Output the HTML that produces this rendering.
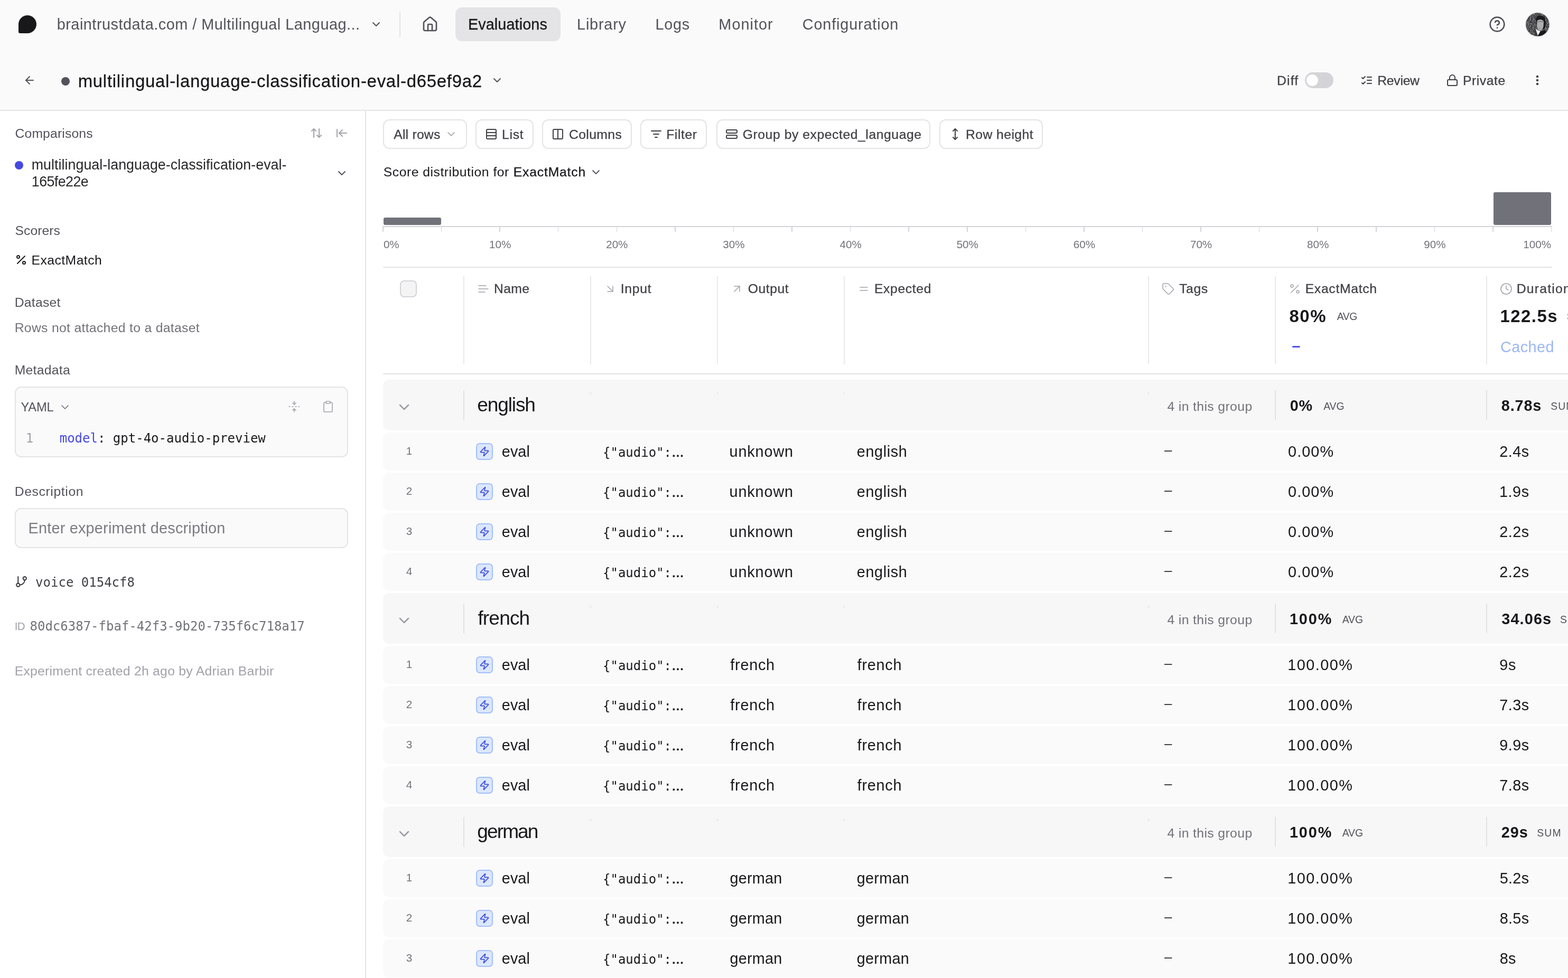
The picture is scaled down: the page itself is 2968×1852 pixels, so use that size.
<!DOCTYPE html>
<html lang="en"><head><meta charset="utf-8"><title>Braintrust - Experiment</title>
<style>
*{box-sizing:border-box;margin:0;padding:0}
html,body{width:2968px;height:1852px;overflow:hidden;background:#fff}
@media (max-width:1600px) and (min-resolution:1.5dppx){body{zoom:.5}}
body{position:relative;font-family:"Liberation Sans",sans-serif;color:#18181b}
.a{position:absolute}
.t{position:absolute;white-space:nowrap}
#tx{position:absolute;left:0;top:0;width:2968px;height:1852px;overflow:hidden;will-change:transform}
.m{font-family:"DejaVu Sans Mono","Liberation Mono",monospace}
.w5{-webkit-text-stroke:.3px currentColor}
.w6{font-weight:700}
svg{position:absolute;overflow:visible}
.btn{position:absolute;top:226px;height:56px;border:2px solid #e4e4e7;border-radius:12px;background:#fff}
.row{position:absolute;left:725px;width:2243px;height:72px;background:#fafafa;border-radius:12px 0 0 12px}
.grp{position:absolute;left:725px;width:2243px;height:96px;background:#f7f7f8;border-radius:12px 0 0 12px}
.ic{position:absolute;left:901px;width:32px;height:32px;border:2px solid #a3bffa;background:#dbe7fe;border-radius:7px}
</style></head><body>
<div class="a" style="left:0px;top:0px;width:2968px;height:208px;background:#fafafa"></div>
<div class="a" style="left:0px;top:208px;width:2968px;height:2px;background:#e4e4e7"></div>
<div class="a" style="left:35px;top:28.5px;width:34px;height:34px;background:#18181b;border-radius:17px 17px 17px 3px"></div>
<svg style="left:700px;top:34.25px;color:#52525b" width="24" height="24" viewBox="0 0 24 24" fill="none" stroke="currentColor" stroke-width="2" stroke-linecap="round" stroke-linejoin="round"><path d="m6 9 6 6 6-6"/></svg>
<div class="a" style="left:756px;top:22px;width:2px;height:48px;background:#e4e4e7"></div>
<svg style="left:797.8px;top:29.5px;color:#52525b" width="32" height="32" viewBox="0 0 24 24" fill="none" stroke="currentColor" stroke-width="2" stroke-linecap="round" stroke-linejoin="round"><path d="M15 21v-8a1 1 0 0 0-1-1h-4a1 1 0 0 0-1 1v8"/><path d="M3 10a2 2 0 0 1 .709-1.528l7-5.999a2 2 0 0 1 2.582 0l7 5.999A2 2 0 0 1 21 10v9a2 2 0 0 1-2 2H5a2 2 0 0 1-2-2z"/></svg>
<div class="a" style="left:862px;top:14px;width:199px;height:64px;background:#e4e4e7;border-radius:12px"></div>
<svg style="left:2818.1px;top:29.8px;color:#52525b" width="32" height="32" viewBox="0 0 24 24" fill="none" stroke="currentColor" stroke-width="2" stroke-linecap="round" stroke-linejoin="round"><circle cx="12" cy="12" r="10"/><path d="M9.09 9a3 3 0 0 1 5.83 1c0 2-3 3-3 3"/><path d="M12 17h.01"/></svg>
<svg style="left:2886.7px;top:22.6px" width="46.8" height="46.8" viewBox="0 0 46.8 46.8"><defs><clipPath id="av"><circle cx="23.4" cy="23.4" r="22.2"/></clipPath><filter id="nz" x="0" y="0" width="100%" height="100%"><feTurbulence type="fractalNoise" baseFrequency="0.55" numOctaves="2" seed="7"/><feColorMatrix type="matrix" values="0 0 0 0 0.55  0 0 0 0 0.55  0 0 0 0 0.56  2 2 2 0 -2.9"/></filter></defs><circle cx="23.4" cy="23.4" r="23.4" fill="#e4e4e7"/><g clip-path="url(#av)"><rect width="47" height="47" fill="#39393b"/><rect width="47" height="47" filter="url(#nz)"/><path d="M20 12c2-7 15-8 18 1l1 10-3 9-14-2z" fill="#1c1c1e"/><path d="M22.500 17c2-4 11-4 12.500 1l-.5 9c-1 5-4 8-6.500 8s-5.500-4-6-9z" fill="#aeaeb1"/><path d="M24 19c3-2 7-2 10 0" stroke="#6e6e72" stroke-width="1.200" fill="none"/><path d="M25 30c2 1.500 5 1.500 7 0" stroke="#8a8a8e" stroke-width="1" fill="none"/><path d="M18.500 31l3.500 3 4 12-9-2z" fill="#3c3c3f"/><path d="M19.500 31.500l4.500 13 5-8.500c-3-.5-6-2-9.500-4.500z" fill="#f4f4f4"/><path d="M24 44.500l5-8.500 9-2 3 8-8 5z" fill="#1a1a1c"/></g></svg>
<svg style="left:44px;top:140px;color:#52525b" width="24" height="24" viewBox="0 0 24 24" fill="none" stroke="currentColor" stroke-width="2" stroke-linecap="round" stroke-linejoin="round"><path d="m12 19-7-7 7-7"/><path d="M19 12H5"/></svg>
<div class="a" style="left:116px;top:145.8px;width:16px;height:16px;background:#52525b;border-radius:50%"></div>
<svg style="left:929px;top:140px;color:#52525b" width="24" height="24" viewBox="0 0 24 24" fill="none" stroke="currentColor" stroke-width="2" stroke-linecap="round" stroke-linejoin="round"><path d="m6 9 6 6 6-6"/></svg>
<div class="a" style="left:2470px;top:137px;width:54px;height:30px;background:#d4d4d8;border-radius:15px"></div>
<div class="a" style="left:2473.2px;top:141px;width:22px;height:22px;background:#fff;border-radius:50%"></div>
<svg style="left:2575px;top:140.2px;color:#3f3f46" width="24" height="24" viewBox="0 0 24 24" fill="none" stroke="currentColor" stroke-width="2" stroke-linecap="round" stroke-linejoin="round"><path d="m3 17 2 2 4-4"/><path d="m3 7 2 2 4-4"/><path d="M13 6h8"/><path d="M13 12h8"/><path d="M13 18h8"/></svg>
<svg style="left:2736.9px;top:139.8px;color:#3f3f46" width="24" height="24" viewBox="0 0 24 24" fill="none" stroke="currentColor" stroke-width="2" stroke-linecap="round" stroke-linejoin="round"><rect width="18" height="11" x="3" y="11" rx="2" ry="2"/><path d="M7 11V7a5 5 0 0 1 10 0v4"/></svg>
<svg style="left:2897.8px;top:140.2px;color:#3f3f46" width="24" height="24" viewBox="0 0 24 24" fill="none" stroke="currentColor" stroke-width="2.6" stroke-linecap="round" stroke-linejoin="round"><circle cx="12" cy="12" r="1"/><circle cx="12" cy="5" r="1"/><circle cx="12" cy="19" r="1"/></svg>
<div class="a" style="left:691px;top:210px;width:2px;height:1642px;background:#e4e4e7"></div>
<svg style="left:587px;top:240.1px;color:#a1a1aa" width="24" height="24" viewBox="0 0 24 24" fill="none" stroke="currentColor" stroke-width="2" stroke-linecap="round" stroke-linejoin="round"><path d="m21 16-4 4-4-4"/><path d="M17 20V4"/><path d="m3 8 4-4 4 4"/><path d="M7 4v16"/></svg>
<svg style="left:635px;top:240.1px;color:#a1a1aa" width="24" height="24" viewBox="0 0 24 24" fill="none" stroke="currentColor" stroke-width="2" stroke-linecap="round" stroke-linejoin="round"><path d="M3 19V5"/><path d="m13 6-6 6 6 6"/><path d="M7 12h14"/></svg>
<div class="a" style="left:28px;top:305px;width:16px;height:16px;background:#4649e0;border-radius:50%"></div>
<svg style="left:635px;top:316px;color:#52525b" width="24" height="24" viewBox="0 0 24 24" fill="none" stroke="currentColor" stroke-width="2" stroke-linecap="round" stroke-linejoin="round"><path d="m6 9 6 6 6-6"/></svg>
<svg style="left:28px;top:480px;color:#18181b" width="24" height="24" viewBox="0 0 24 24" fill="none" stroke="currentColor" stroke-width="2" stroke-linecap="round" stroke-linejoin="round"><line x1="19" x2="5" y1="5" y2="19"/><circle cx="6.5" cy="6.5" r="2.5"/><circle cx="17.5" cy="17.5" r="2.5"/></svg>
<div class="a" style="left:28px;top:732px;width:631px;height:133.5px;border:2px solid #e4e4e7;border-radius:12px;background:#fafafa"></div>
<svg style="left:111px;top:758.5px;color:#71717a" width="24" height="24" viewBox="0 0 24 24" fill="none" stroke="currentColor" stroke-width="1.6" stroke-linecap="round" stroke-linejoin="round"><path d="m6 9 6 6 6-6"/></svg>
<svg style="left:544.6px;top:757.75px;color:#a1a1aa" width="24" height="24" viewBox="0 0 24 24" fill="none" stroke="currentColor" stroke-width="1.6" stroke-linecap="round" stroke-linejoin="round"><path d="M12 22v-6"/><path d="M12 8V2"/><path d="M4 12H2"/><path d="M10 12H8"/><path d="M16 12h-2"/><path d="M22 12h-2"/><path d="m15 19-3-3-3 3"/><path d="m15 5-3 3-3-3"/></svg>
<svg style="left:609.4px;top:758px;color:#a1a1aa" width="24" height="24" viewBox="0 0 24 24" fill="none" stroke="currentColor" stroke-width="1.6" stroke-linecap="round" stroke-linejoin="round"><rect width="8" height="4" x="8" y="2" rx="1" ry="1"/><path d="M16 4h2a2 2 0 0 1 2 2v14a2 2 0 0 1-2 2H6a2 2 0 0 1-2-2V6a2 2 0 0 1 2-2h2"/></svg>
<div class="a" style="left:28px;top:962px;width:631px;height:76px;border:2px solid #e4e4e7;border-radius:12px;background:#fafafa"></div>
<svg style="left:27.5px;top:1089.4px;color:#3f3f46" width="25" height="25" viewBox="0 0 24 24" fill="none" stroke="currentColor" stroke-width="2" stroke-linecap="round" stroke-linejoin="round"><line x1="6" x2="6" y1="3" y2="15"/><circle cx="18" cy="6" r="3"/><circle cx="6" cy="18" r="3"/><path d="M18 9a9 9 0 0 1-9 9"/></svg>
<div class="btn" style="left:725px;width:158.75px"></div>
<svg style="left:842px;top:242px;color:#a1a1aa" width="24" height="24" viewBox="0 0 24 24" fill="none" stroke="currentColor" stroke-width="1.7" stroke-linecap="round" stroke-linejoin="round"><path d="m6 9 6 6 6-6"/></svg>
<div class="btn" style="left:900px;width:109.5px"></div>
<svg style="left:918px;top:242px;color:#3f3f46" width="24" height="24" viewBox="0 0 24 24" fill="none" stroke="currentColor" stroke-width="2" stroke-linecap="round" stroke-linejoin="round"><rect width="18" height="18" x="3" y="3" rx="2"/><path d="M21 9H3"/><path d="M21 15H3"/></svg>
<div class="btn" style="left:1026.25px;width:169.25px"></div>
<svg style="left:1043.75px;top:242px;color:#3f3f46" width="24" height="24" viewBox="0 0 24 24" fill="none" stroke="currentColor" stroke-width="2" stroke-linecap="round" stroke-linejoin="round"><rect width="18" height="18" x="3" y="3" rx="2"/><path d="M12 3v18"/></svg>
<div class="btn" style="left:1212px;width:126.25px"></div>
<svg style="left:1229.5px;top:242px;color:#3f3f46" width="24" height="24" viewBox="0 0 24 24" fill="none" stroke="currentColor" stroke-width="2" stroke-linecap="round" stroke-linejoin="round"><path d="M3 6h18"/><path d="M7 12h10"/><path d="M10 18h4"/></svg>
<div class="btn" style="left:1355.5px;width:405.75px"></div>
<svg style="left:1372.75px;top:242.4px;color:#3f3f46" width="24" height="24" viewBox="0 0 24 24" fill="none" stroke="currentColor" stroke-width="2" stroke-linecap="round" stroke-linejoin="round"><rect width="20" height="6" x="2" y="4" rx="2"/><rect width="20" height="6" x="2" y="14" rx="2"/></svg>
<div class="btn" style="left:1778px;width:196px"></div>
<svg style="left:1796px;top:242.4px;color:#3f3f46" width="24" height="24" viewBox="0 0 24 24" fill="none" stroke="currentColor" stroke-width="2" stroke-linecap="round" stroke-linejoin="round"><path d="M12 2v20"/><path d="m8 18 4 4 4-4"/><path d="m8 6 4-4 4 4"/></svg>
<svg style="left:1116px;top:313.5px;color:#52525b" width="24" height="24" viewBox="0 0 24 24" fill="none" stroke="currentColor" stroke-width="1.8" stroke-linecap="round" stroke-linejoin="round"><path d="m6 9 6 6 6-6"/></svg>
<div class="a" style="left:726px;top:412px;width:109px;height:14px;background:#71717a;border-radius:3px"></div>
<div class="a" style="left:2827px;top:364px;width:109px;height:62px;background:#71717a;border-radius:3px"></div>
<div class="a" style="left:724.25px;top:428px;width:2213.25px;height:2px;background:#d4d4d8"></div>
<div class="a" style="left:724.25px;top:429px;width:1.5px;height:10px;background:#d4d4d8"></div>
<div class="a" style="left:834.83px;top:429px;width:1.5px;height:10px;background:#d4d4d8"></div>
<div class="a" style="left:945.4px;top:429px;width:1.5px;height:10px;background:#d4d4d8"></div>
<div class="a" style="left:1055.97px;top:429px;width:1.5px;height:10px;background:#d4d4d8"></div>
<div class="a" style="left:1166.55px;top:429px;width:1.5px;height:10px;background:#d4d4d8"></div>
<div class="a" style="left:1277.12px;top:429px;width:1.5px;height:10px;background:#d4d4d8"></div>
<div class="a" style="left:1387.7px;top:429px;width:1.5px;height:10px;background:#d4d4d8"></div>
<div class="a" style="left:1498.28px;top:429px;width:1.5px;height:10px;background:#d4d4d8"></div>
<div class="a" style="left:1608.85px;top:429px;width:1.5px;height:10px;background:#d4d4d8"></div>
<div class="a" style="left:1719.43px;top:429px;width:1.5px;height:10px;background:#d4d4d8"></div>
<div class="a" style="left:1830px;top:429px;width:1.5px;height:10px;background:#d4d4d8"></div>
<div class="a" style="left:1940.58px;top:429px;width:1.5px;height:10px;background:#d4d4d8"></div>
<div class="a" style="left:2051.15px;top:429px;width:1.5px;height:10px;background:#d4d4d8"></div>
<div class="a" style="left:2161.73px;top:429px;width:1.5px;height:10px;background:#d4d4d8"></div>
<div class="a" style="left:2272.3px;top:429px;width:1.5px;height:10px;background:#d4d4d8"></div>
<div class="a" style="left:2382.88px;top:429px;width:1.5px;height:10px;background:#d4d4d8"></div>
<div class="a" style="left:2493.45px;top:429px;width:1.5px;height:10px;background:#d4d4d8"></div>
<div class="a" style="left:2604.03px;top:429px;width:1.5px;height:10px;background:#d4d4d8"></div>
<div class="a" style="left:2714.6px;top:429px;width:1.5px;height:10px;background:#d4d4d8"></div>
<div class="a" style="left:2825.18px;top:429px;width:1.5px;height:10px;background:#d4d4d8"></div>
<div class="a" style="left:2935.75px;top:429px;width:1.5px;height:10px;background:#d4d4d8"></div>
<div class="a" style="left:725px;top:505px;width:2212.5px;height:2px;background:#e4e4e7"></div>
<div class="a" style="left:725px;top:707px;width:2243px;height:2px;background:#e4e4e7"></div>
<div class="a" style="left:877px;top:523px;width:2px;height:167px;background:#e9e9ec"></div>
<div class="a" style="left:1117px;top:523px;width:2px;height:167px;background:#e9e9ec"></div>
<div class="a" style="left:1357px;top:523px;width:2px;height:167px;background:#e9e9ec"></div>
<div class="a" style="left:1597px;top:523px;width:2px;height:167px;background:#e9e9ec"></div>
<div class="a" style="left:2173px;top:523px;width:2px;height:167px;background:#e9e9ec"></div>
<div class="a" style="left:2413px;top:523px;width:2px;height:167px;background:#e9e9ec"></div>
<div class="a" style="left:2813px;top:523px;width:2px;height:167px;background:#e9e9ec"></div>
<div class="a" style="left:757px;top:530.75px;width:32px;height:32px;border:2px solid #d4d4d8;border-radius:8px;background:#f4f4f5"></div>
<svg style="left:902.75px;top:534.9px;color:#a1a1aa" width="24" height="24" viewBox="0 0 24 24" fill="none" stroke="currentColor" stroke-width="1.5" stroke-linecap="round" stroke-linejoin="round"><path d="M17 6H3"/><path d="M21 12H3"/><path d="M15 18H3"/></svg>
<svg style="left:1143px;top:535px;color:#a1a1aa" width="24" height="24" viewBox="0 0 24 24" fill="none" stroke="currentColor" stroke-width="1.5" stroke-linecap="round" stroke-linejoin="round"><path d="m7 7 10 10"/><path d="M17 7v10H7"/></svg>
<svg style="left:1383px;top:534.5px;color:#a1a1aa" width="24" height="24" viewBox="0 0 24 24" fill="none" stroke="currentColor" stroke-width="1.5" stroke-linecap="round" stroke-linejoin="round"><path d="M7 7h10v10"/><path d="M7 17 17 7"/></svg>
<svg style="left:1622.75px;top:534.6px;color:#a1a1aa" width="24" height="24" viewBox="0 0 24 24" fill="none" stroke="currentColor" stroke-width="1.5" stroke-linecap="round" stroke-linejoin="round"><line x1="5" x2="19" y1="9" y2="9"/><line x1="5" x2="19" y1="15" y2="15"/></svg>
<svg style="left:2199px;top:534.5px;color:#a1a1aa" width="24" height="24" viewBox="0 0 24 24" fill="none" stroke="currentColor" stroke-width="1.5" stroke-linecap="round" stroke-linejoin="round"><path d="M12.586 2.586A2 2 0 0 0 11.172 2H4a2 2 0 0 0-2 2v7.172a2 2 0 0 0 .586 1.414l8.704 8.704a2.426 2.426 0 0 0 3.42 0l6.58-6.58a2.426 2.426 0 0 0 0-3.42z"/><circle cx="7.5" cy="7.5" r=".5" fill="currentColor"/></svg>
<svg style="left:2439.2px;top:535px;color:#a1a1aa" width="24" height="24" viewBox="0 0 24 24" fill="none" stroke="currentColor" stroke-width="1.5" stroke-linecap="round" stroke-linejoin="round"><line x1="19" x2="5" y1="5" y2="19"/><circle cx="6.5" cy="6.5" r="2.5"/><circle cx="17.5" cy="17.5" r="2.5"/></svg>
<svg style="left:2838.75px;top:534.6px;color:#a1a1aa" width="24" height="24" viewBox="0 0 24 24" fill="none" stroke="currentColor" stroke-width="1.6" stroke-linecap="round" stroke-linejoin="round"><circle cx="12" cy="12" r="10"/><polyline points="12 6 12 12 16 14"/></svg>
<div class="grp" style="top:719px"></div>
<svg style="left:749px;top:755px;color:#9b9ba3" width="32" height="32" viewBox="0 0 24 24" fill="none" stroke="currentColor" stroke-width="1.9" stroke-linecap="round" stroke-linejoin="round"><path d="m6 9 6 6 6-6"/></svg>
<div class="a" style="left:877px;top:739px;width:2px;height:57px;background:#e2e2e5"></div>
<div class="a" style="left:1117px;top:743px;width:2px;height:4px;background:#e6e6e9"></div>
<div class="a" style="left:1357px;top:743px;width:2px;height:4px;background:#e6e6e9"></div>
<div class="a" style="left:1597px;top:743px;width:2px;height:4px;background:#e6e6e9"></div>
<div class="a" style="left:2173px;top:743px;width:2px;height:4px;background:#e6e6e9"></div>
<div class="a" style="left:2413px;top:739px;width:2px;height:56px;background:#e2e2e5"></div>
<div class="a" style="left:2813px;top:739px;width:2px;height:56px;background:#e2e2e5"></div>
<div class="row" style="top:819px"></div>
<div class="ic" style="top:839px"></div>
<svg style="left:907px;top:845px;color:#3f4ddb" width="20" height="20" viewBox="0 0 24 24" fill="none" stroke="currentColor" stroke-width="2" stroke-linecap="round" stroke-linejoin="round"><path d="M4 14a1 1 0 0 1-.78-1.63l9.9-10.2a.5.5 0 0 1 .86.46l-1.92 6.02A1 1 0 0 0 13 10h7a1 1 0 0 1 .78 1.63l-9.9 10.2a.5.5 0 0 1-.86-.46l1.92-6.02A1 1 0 0 0 11 14z"/></svg>
<div class="row" style="top:895px"></div>
<div class="ic" style="top:915px"></div>
<svg style="left:907px;top:921px;color:#3f4ddb" width="20" height="20" viewBox="0 0 24 24" fill="none" stroke="currentColor" stroke-width="2" stroke-linecap="round" stroke-linejoin="round"><path d="M4 14a1 1 0 0 1-.78-1.63l9.9-10.2a.5.5 0 0 1 .86.46l-1.92 6.02A1 1 0 0 0 13 10h7a1 1 0 0 1 .78 1.63l-9.9 10.2a.5.5 0 0 1-.86-.46l1.92-6.02A1 1 0 0 0 11 14z"/></svg>
<div class="row" style="top:971px"></div>
<div class="ic" style="top:991px"></div>
<svg style="left:907px;top:997px;color:#3f4ddb" width="20" height="20" viewBox="0 0 24 24" fill="none" stroke="currentColor" stroke-width="2" stroke-linecap="round" stroke-linejoin="round"><path d="M4 14a1 1 0 0 1-.78-1.63l9.9-10.2a.5.5 0 0 1 .86.46l-1.92 6.02A1 1 0 0 0 13 10h7a1 1 0 0 1 .78 1.63l-9.9 10.2a.5.5 0 0 1-.86-.46l1.92-6.02A1 1 0 0 0 11 14z"/></svg>
<div class="row" style="top:1047px"></div>
<div class="ic" style="top:1067px"></div>
<svg style="left:907px;top:1073px;color:#3f4ddb" width="20" height="20" viewBox="0 0 24 24" fill="none" stroke="currentColor" stroke-width="2" stroke-linecap="round" stroke-linejoin="round"><path d="M4 14a1 1 0 0 1-.78-1.63l9.9-10.2a.5.5 0 0 1 .86.46l-1.92 6.02A1 1 0 0 0 13 10h7a1 1 0 0 1 .78 1.63l-9.9 10.2a.5.5 0 0 1-.86-.46l1.92-6.02A1 1 0 0 0 11 14z"/></svg>
<div class="grp" style="top:1123px"></div>
<svg style="left:749px;top:1159px;color:#9b9ba3" width="32" height="32" viewBox="0 0 24 24" fill="none" stroke="currentColor" stroke-width="1.9" stroke-linecap="round" stroke-linejoin="round"><path d="m6 9 6 6 6-6"/></svg>
<div class="a" style="left:877px;top:1143px;width:2px;height:57px;background:#e2e2e5"></div>
<div class="a" style="left:1117px;top:1147px;width:2px;height:4px;background:#e6e6e9"></div>
<div class="a" style="left:1357px;top:1147px;width:2px;height:4px;background:#e6e6e9"></div>
<div class="a" style="left:1597px;top:1147px;width:2px;height:4px;background:#e6e6e9"></div>
<div class="a" style="left:2173px;top:1147px;width:2px;height:4px;background:#e6e6e9"></div>
<div class="a" style="left:2413px;top:1143px;width:2px;height:56px;background:#e2e2e5"></div>
<div class="a" style="left:2813px;top:1143px;width:2px;height:56px;background:#e2e2e5"></div>
<div class="row" style="top:1223px"></div>
<div class="ic" style="top:1243px"></div>
<svg style="left:907px;top:1249px;color:#3f4ddb" width="20" height="20" viewBox="0 0 24 24" fill="none" stroke="currentColor" stroke-width="2" stroke-linecap="round" stroke-linejoin="round"><path d="M4 14a1 1 0 0 1-.78-1.63l9.9-10.2a.5.5 0 0 1 .86.46l-1.92 6.02A1 1 0 0 0 13 10h7a1 1 0 0 1 .78 1.63l-9.9 10.2a.5.5 0 0 1-.86-.46l1.92-6.02A1 1 0 0 0 11 14z"/></svg>
<div class="row" style="top:1299px"></div>
<div class="ic" style="top:1319px"></div>
<svg style="left:907px;top:1325px;color:#3f4ddb" width="20" height="20" viewBox="0 0 24 24" fill="none" stroke="currentColor" stroke-width="2" stroke-linecap="round" stroke-linejoin="round"><path d="M4 14a1 1 0 0 1-.78-1.63l9.9-10.2a.5.5 0 0 1 .86.46l-1.92 6.02A1 1 0 0 0 13 10h7a1 1 0 0 1 .78 1.63l-9.9 10.2a.5.5 0 0 1-.86-.46l1.92-6.02A1 1 0 0 0 11 14z"/></svg>
<div class="row" style="top:1375px"></div>
<div class="ic" style="top:1395px"></div>
<svg style="left:907px;top:1401px;color:#3f4ddb" width="20" height="20" viewBox="0 0 24 24" fill="none" stroke="currentColor" stroke-width="2" stroke-linecap="round" stroke-linejoin="round"><path d="M4 14a1 1 0 0 1-.78-1.63l9.9-10.2a.5.5 0 0 1 .86.46l-1.92 6.02A1 1 0 0 0 13 10h7a1 1 0 0 1 .78 1.63l-9.9 10.2a.5.5 0 0 1-.86-.46l1.92-6.02A1 1 0 0 0 11 14z"/></svg>
<div class="row" style="top:1451px"></div>
<div class="ic" style="top:1471px"></div>
<svg style="left:907px;top:1477px;color:#3f4ddb" width="20" height="20" viewBox="0 0 24 24" fill="none" stroke="currentColor" stroke-width="2" stroke-linecap="round" stroke-linejoin="round"><path d="M4 14a1 1 0 0 1-.78-1.63l9.9-10.2a.5.5 0 0 1 .86.46l-1.92 6.02A1 1 0 0 0 13 10h7a1 1 0 0 1 .78 1.63l-9.9 10.2a.5.5 0 0 1-.86-.46l1.92-6.02A1 1 0 0 0 11 14z"/></svg>
<div class="grp" style="top:1527px"></div>
<svg style="left:749px;top:1563px;color:#9b9ba3" width="32" height="32" viewBox="0 0 24 24" fill="none" stroke="currentColor" stroke-width="1.9" stroke-linecap="round" stroke-linejoin="round"><path d="m6 9 6 6 6-6"/></svg>
<div class="a" style="left:877px;top:1547px;width:2px;height:57px;background:#e2e2e5"></div>
<div class="a" style="left:1117px;top:1551px;width:2px;height:4px;background:#e6e6e9"></div>
<div class="a" style="left:1357px;top:1551px;width:2px;height:4px;background:#e6e6e9"></div>
<div class="a" style="left:1597px;top:1551px;width:2px;height:4px;background:#e6e6e9"></div>
<div class="a" style="left:2173px;top:1551px;width:2px;height:4px;background:#e6e6e9"></div>
<div class="a" style="left:2413px;top:1547px;width:2px;height:56px;background:#e2e2e5"></div>
<div class="a" style="left:2813px;top:1547px;width:2px;height:56px;background:#e2e2e5"></div>
<div class="row" style="top:1627px"></div>
<div class="ic" style="top:1647px"></div>
<svg style="left:907px;top:1653px;color:#3f4ddb" width="20" height="20" viewBox="0 0 24 24" fill="none" stroke="currentColor" stroke-width="2" stroke-linecap="round" stroke-linejoin="round"><path d="M4 14a1 1 0 0 1-.78-1.63l9.9-10.2a.5.5 0 0 1 .86.46l-1.92 6.02A1 1 0 0 0 13 10h7a1 1 0 0 1 .78 1.63l-9.9 10.2a.5.5 0 0 1-.86-.46l1.92-6.02A1 1 0 0 0 11 14z"/></svg>
<div class="row" style="top:1703px"></div>
<div class="ic" style="top:1723px"></div>
<svg style="left:907px;top:1729px;color:#3f4ddb" width="20" height="20" viewBox="0 0 24 24" fill="none" stroke="currentColor" stroke-width="2" stroke-linecap="round" stroke-linejoin="round"><path d="M4 14a1 1 0 0 1-.78-1.63l9.9-10.2a.5.5 0 0 1 .86.46l-1.92 6.02A1 1 0 0 0 13 10h7a1 1 0 0 1 .78 1.63l-9.9 10.2a.5.5 0 0 1-.86-.46l1.92-6.02A1 1 0 0 0 11 14z"/></svg>
<div class="row" style="top:1779px"></div>
<div class="ic" style="top:1799px"></div>
<svg style="left:907px;top:1805px;color:#3f4ddb" width="20" height="20" viewBox="0 0 24 24" fill="none" stroke="currentColor" stroke-width="2" stroke-linecap="round" stroke-linejoin="round"><path d="M4 14a1 1 0 0 1-.78-1.63l9.9-10.2a.5.5 0 0 1 .86.46l-1.92 6.02A1 1 0 0 0 13 10h7a1 1 0 0 1 .78 1.63l-9.9 10.2a.5.5 0 0 1-.86-.46l1.92-6.02A1 1 0 0 0 11 14z"/></svg>
<div id="tx">
<div class="t" id="bc" style="top:27.60px;font-size:28.84px;line-height:37px;color:#52525b;left:107.70px;letter-spacing:0.515px;">braintrustdata.com / Multilingual Languag...</div>
<div class="t w5" id="n1" style="top:27.60px;font-size:28.84px;line-height:37px;color:#18181b;left:885.95px;letter-spacing:0.085px;">Evaluations</div>
<div class="t" id="n2" style="top:27.60px;font-size:28.84px;line-height:37px;color:#52525b;left:1092.05px;letter-spacing:0.800px;">Library</div>
<div class="t" id="n3" style="top:27.60px;font-size:28.84px;line-height:37px;color:#52525b;left:1240.45px;letter-spacing:0.772px;">Logs</div>
<div class="t" id="n4" style="top:27.60px;font-size:28.84px;line-height:37px;color:#52525b;left:1360.35px;letter-spacing:1.021px;">Monitor</div>
<div class="t" id="n5" style="top:27.60px;font-size:28.84px;line-height:37px;color:#52525b;left:1518.85px;letter-spacing:0.835px;">Configuration</div>
<div class="t w5" id="title" style="top:131.60px;font-size:32.96px;line-height:43px;color:#18181b;left:147.64px;letter-spacing:0.724px;">multilingual-language-classification-eval-d65ef9a2</div>
<div class="t w5" id="diff" style="top:136.60px;font-size:24.72px;line-height:32px;color:#3f3f46;left:2417.00px;letter-spacing:1.145px;">Diff</div>
<div class="t w5" id="review" style="top:136.60px;font-size:24.72px;line-height:32px;color:#3f3f46;left:2607.30px;letter-spacing:-0.279px;">Review</div>
<div class="t w5" id="private" style="top:136.60px;font-size:24.72px;line-height:32px;color:#3f3f46;left:2769.10px;letter-spacing:0.519px;">Private</div>
<div class="t" id="s_comp" style="top:236.55px;font-size:24.72px;line-height:32px;color:#52525b;left:28.50px;letter-spacing:0.144px;">Comparisons</div>
<div class="t" id="s_c1" style="top:295.05px;font-size:26.78px;line-height:35px;color:#27272a;left:59.78px;letter-spacing:0.052px;">multilingual-language-classification-eval-</div>
<div class="t" id="s_c2" style="top:326.80px;font-size:26.78px;line-height:35px;color:#27272a;left:59.78px;letter-spacing:-0.526px;">165fe22e</div>
<div class="t" id="s_sc" style="top:420.80px;font-size:24.72px;line-height:32px;color:#52525b;left:28.60px;letter-spacing:0.008px;">Scorers</div>
<div class="t" id="s_em" style="top:476.55px;font-size:24.72px;line-height:32px;color:#18181b;left:59.45px;letter-spacing:0.463px;">ExactMatch</div>
<div class="t" id="s_ds" style="top:556.55px;font-size:24.72px;line-height:32px;color:#52525b;left:27.70px;letter-spacing:0.247px;">Dataset</div>
<div class="t" id="s_rows" style="top:604.55px;font-size:24.72px;line-height:32px;color:#71717a;left:27.70px;letter-spacing:0.315px;">Rows not attached to a dataset</div>
<div class="t" id="s_md" style="top:684.55px;font-size:24.72px;line-height:32px;color:#52525b;left:27.70px;letter-spacing:0.269px;">Metadata</div>
<div class="t" id="s_yaml" style="top:755.55px;font-size:23.69px;line-height:31px;color:#52525b;left:39.45px;letter-spacing:-0.159px;">YAML</div>
<div class="t m" id="s_ln" style="top:815.10px;font-size:24px;line-height:31px;color:#a1a1aa;left:48.70px;">1</div>
<div class="t m" id="s_code" style="top:815.10px;font-size:24px;line-height:31px;color:#18181b;left:112.70px;"><span style="color:#4649e0">model</span>: gpt-4o-audio-preview</div>
<div class="t" id="s_desc" style="top:914.55px;font-size:24.72px;line-height:32px;color:#52525b;left:27.70px;letter-spacing:0.616px;">Description</div>
<div class="t" id="s_ph" style="top:981.80px;font-size:28.84px;line-height:37px;color:#7b7b84;left:53.45px;letter-spacing:0.223px;">Enter experiment description</div>
<div class="t m" id="s_voice" style="top:1087.50px;font-size:24px;line-height:31px;color:#3f3f46;left:67.10px;">voice 0154cf8</div>
<div class="t" id="s_id" style="top:1171.80px;font-size:20.6px;line-height:27px;color:#a1a1aa;left:27.80px;letter-spacing:-0.723px;">ID</div>
<div class="t m" id="s_uuid" style="top:1171.25px;font-size:24px;line-height:31px;color:#71717a;left:56.50px;">80dc6387-fbaf-42f3-9b20-735f6c718a17</div>
<div class="t" id="s_exp" style="top:1255.00px;font-size:24.72px;line-height:32px;color:#a1a1aa;left:27.70px;letter-spacing:0.266px;">Experiment created 2h ago by Adrian Barbir</div>
<div class="t w5" id="b1" style="top:238.80px;font-size:24.72px;line-height:32px;color:#3f3f46;left:745.20px;letter-spacing:0.226px;">All rows</div>
<div class="t w5" id="b2" style="top:238.80px;font-size:24.72px;line-height:32px;color:#3f3f46;left:949.95px;letter-spacing:0.734px;">List</div>
<div class="t w5" id="b3" style="top:238.80px;font-size:24.72px;line-height:32px;color:#3f3f46;left:1077.00px;letter-spacing:0.379px;">Columns</div>
<div class="t w5" id="b4" style="top:238.80px;font-size:24.72px;line-height:32px;color:#3f3f46;left:1261.20px;letter-spacing:0.580px;">Filter</div>
<div class="t w5" id="b5" style="top:238.80px;font-size:24.72px;line-height:32px;color:#3f3f46;left:1405.75px;letter-spacing:0.556px;">Group by expected_language</div>
<div class="t w5" id="b6" style="top:238.80px;font-size:24.72px;line-height:32px;color:#3f3f46;left:1827.95px;letter-spacing:0.445px;">Row height</div>
<div class="t" id="sd" style="top:309.55px;font-size:24.72px;line-height:32px;color:#18181b;left:725.85px;letter-spacing:0.511px;">Score distribution for</div>
<div class="t w5" id="sd2" style="top:309.55px;font-size:24.72px;line-height:32px;color:#18181b;left:971.70px;letter-spacing:0.824px;">ExactMatch</div>
<div class="t" id="ax0" style="top:448.80px;font-size:20.6px;line-height:27px;color:#71717a;left:725.90px;">0%</div>
<div class="t" id="ax1" style="top:448.80px;font-size:20.6px;line-height:27px;color:#71717a;left:846.65px;width:200px;text-align:center;">10%</div>
<div class="t" id="ax2" style="top:448.80px;font-size:20.6px;line-height:27px;color:#71717a;left:1067.8px;width:200px;text-align:center;">20%</div>
<div class="t" id="ax3" style="top:448.80px;font-size:20.6px;line-height:27px;color:#71717a;left:1288.95px;width:200px;text-align:center;">30%</div>
<div class="t" id="ax4" style="top:448.80px;font-size:20.6px;line-height:27px;color:#71717a;left:1510.1px;width:200px;text-align:center;">40%</div>
<div class="t" id="ax5" style="top:448.80px;font-size:20.6px;line-height:27px;color:#71717a;left:1731.25px;width:200px;text-align:center;">50%</div>
<div class="t" id="ax6" style="top:448.80px;font-size:20.6px;line-height:27px;color:#71717a;left:1952.4px;width:200px;text-align:center;">60%</div>
<div class="t" id="ax7" style="top:448.80px;font-size:20.6px;line-height:27px;color:#71717a;left:2173.55px;width:200px;text-align:center;">70%</div>
<div class="t" id="ax8" style="top:448.80px;font-size:20.6px;line-height:27px;color:#71717a;left:2394.7px;width:200px;text-align:center;">80%</div>
<div class="t" id="ax9" style="top:448.80px;font-size:20.6px;line-height:27px;color:#71717a;left:2615.85px;width:200px;text-align:center;">90%</div>
<div class="t" id="ax10" style="top:448.80px;font-size:20.6px;line-height:27px;color:#71717a;right:32px;">100%</div>
<div class="t w5" id="h1" style="top:530.55px;font-size:24.72px;line-height:32px;color:#3f3f46;left:934.95px;letter-spacing:0.370px;">Name</div>
<div class="t w5" id="h2" style="top:530.55px;font-size:24.72px;line-height:32px;color:#3f3f46;left:1174.75px;letter-spacing:0.723px;">Input</div>
<div class="t w5" id="h3" style="top:530.55px;font-size:24.72px;line-height:32px;color:#3f3f46;left:1415.85px;letter-spacing:0.513px;">Output</div>
<div class="t w5" id="h4" style="top:530.55px;font-size:24.72px;line-height:32px;color:#3f3f46;left:1654.95px;letter-spacing:0.641px;">Expected</div>
<div class="t w5" id="h5" style="top:530.55px;font-size:24.72px;line-height:32px;color:#3f3f46;left:2232.20px;letter-spacing:0.549px;">Tags</div>
<div class="t w5" id="h6" style="top:530.55px;font-size:24.72px;line-height:32px;color:#3f3f46;left:2470.70px;letter-spacing:0.685px;">ExactMatch</div>
<div class="t w5" id="h7" style="top:530.55px;font-size:24.72px;line-height:32px;color:#3f3f46;left:2870.70px;letter-spacing:1.231px;">Duration</div>
<div class="t w6" id="h6v" style="top:577.30px;font-size:32.96px;line-height:43px;color:#18181b;left:2440.42px;letter-spacing:1.639px;">80%</div>
<div class="t" id="h6a" style="top:586.55px;font-size:19.36px;line-height:25px;color:#52525b;left:2530.70px;letter-spacing:-0.419px;">AVG</div>
<div class="t w6" id="h6d" style="top:636.30px;font-size:28.32px;line-height:37px;color:#4044e8;left:2445.46px;">–</div>
<div class="t w6" id="h7v" style="top:577.30px;font-size:32.96px;line-height:43px;color:#18181b;left:2839.39px;letter-spacing:1.467px;">122.5s</div>
<div class="t" id="h7a" style="top:586.55px;font-size:19.36px;line-height:25px;color:#52525b;left:2965.65px;">SUM</div>
<div class="t" id="h7c" style="top:638.80px;font-size:28.84px;line-height:37px;color:#9cb7f3;left:2840.10px;letter-spacing:0.413px;">Cached</div>
<div class="t" id="g0n" style="top:741.50px;font-size:37.08px;line-height:48px;color:#18181b;left:903.24px;letter-spacing:-1.127px;">english</div>
<div class="t" id="g0c" style="top:754.05px;font-size:24.72px;line-height:32px;color:#71717a;left:2209.45px;letter-spacing:0.387px;">4 in this group</div>
<div class="t w6" id="g0p" style="top:750.00px;font-size:28.84px;line-height:37px;color:#18181b;left:2441.80px;letter-spacing:0.627px;">0%</div>
<div class="t" id="g0a" style="top:756.80px;font-size:19.36px;line-height:25px;color:#52525b;left:2505.20px;letter-spacing:-0.044px;">AVG</div>
<div class="t w6" id="g0d" style="top:750.00px;font-size:28.84px;line-height:37px;color:#18181b;left:2841.80px;letter-spacing:0.850px;">8.78s</div>
<div class="t" id="g0s" style="top:756.80px;font-size:19.36px;line-height:25px;color:#52525b;left:2935.15px;letter-spacing:1.153px;">SUM</div>
<div class="t" id="r00i" style="top:840.30px;font-size:20.6px;line-height:27px;color:#71717a;left:674.5px;width:200px;text-align:center;">1</div>
<div class="t" id="r00n" style="top:836.60px;font-size:28.84px;line-height:37px;color:#18181b;left:949.80px;letter-spacing:0.049px;">eval</div>
<div class="t m" id="r00j" style="top:841.20px;font-size:24px;line-height:31px;color:#18181b;left:1141.00px;">{"audio":<span style="font-family:'Liberation Sans',sans-serif;font-weight:700">…</span></div>
<div class="t" id="r00o" style="top:836.60px;font-size:28.84px;line-height:37px;color:#18181b;left:1380.50px;letter-spacing:0.871px;">unknown</div>
<div class="t" id="r00e" style="top:836.60px;font-size:28.84px;line-height:37px;color:#18181b;left:1621.80px;letter-spacing:0.605px;">english</div>
<div class="t" id="r00t" style="top:836.10px;font-size:25.75px;line-height:33px;color:#27272a;left:2204.00px;">–</div>
<div class="t" id="r00p" style="top:836.60px;font-size:28.84px;line-height:37px;color:#18181b;left:2438.05px;letter-spacing:1.059px;">0.00%</div>
<div class="t" id="r00d" style="top:836.60px;font-size:28.84px;line-height:37px;color:#18181b;left:2838.35px;letter-spacing:0.414px;">2.4s</div>
<div class="t" id="r01i" style="top:916.30px;font-size:20.6px;line-height:27px;color:#71717a;left:674.5px;width:200px;text-align:center;">2</div>
<div class="t" id="r01n" style="top:912.60px;font-size:28.84px;line-height:37px;color:#18181b;left:949.80px;letter-spacing:0.049px;">eval</div>
<div class="t m" id="r01j" style="top:917.20px;font-size:24px;line-height:31px;color:#18181b;left:1141.00px;">{"audio":<span style="font-family:'Liberation Sans',sans-serif;font-weight:700">…</span></div>
<div class="t" id="r01o" style="top:912.60px;font-size:28.84px;line-height:37px;color:#18181b;left:1380.50px;letter-spacing:0.871px;">unknown</div>
<div class="t" id="r01e" style="top:912.60px;font-size:28.84px;line-height:37px;color:#18181b;left:1621.80px;letter-spacing:0.605px;">english</div>
<div class="t" id="r01t" style="top:912.10px;font-size:25.75px;line-height:33px;color:#27272a;left:2204.00px;">–</div>
<div class="t" id="r01p" style="top:912.60px;font-size:28.84px;line-height:37px;color:#18181b;left:2438.05px;letter-spacing:1.059px;">0.00%</div>
<div class="t" id="r01d" style="top:912.60px;font-size:28.84px;line-height:37px;color:#18181b;left:2837.90px;letter-spacing:0.564px;">1.9s</div>
<div class="t" id="r02i" style="top:992.30px;font-size:20.6px;line-height:27px;color:#71717a;left:674.5px;width:200px;text-align:center;">3</div>
<div class="t" id="r02n" style="top:988.60px;font-size:28.84px;line-height:37px;color:#18181b;left:949.80px;letter-spacing:0.049px;">eval</div>
<div class="t m" id="r02j" style="top:993.20px;font-size:24px;line-height:31px;color:#18181b;left:1141.00px;">{"audio":<span style="font-family:'Liberation Sans',sans-serif;font-weight:700">…</span></div>
<div class="t" id="r02o" style="top:988.60px;font-size:28.84px;line-height:37px;color:#18181b;left:1380.50px;letter-spacing:0.871px;">unknown</div>
<div class="t" id="r02e" style="top:988.60px;font-size:28.84px;line-height:37px;color:#18181b;left:1621.80px;letter-spacing:0.605px;">english</div>
<div class="t" id="r02t" style="top:988.10px;font-size:25.75px;line-height:33px;color:#27272a;left:2204.00px;">–</div>
<div class="t" id="r02p" style="top:988.60px;font-size:28.84px;line-height:37px;color:#18181b;left:2438.05px;letter-spacing:1.059px;">0.00%</div>
<div class="t" id="r02d" style="top:988.60px;font-size:28.84px;line-height:37px;color:#18181b;left:2838.35px;letter-spacing:0.414px;">2.2s</div>
<div class="t" id="r03i" style="top:1068.30px;font-size:20.6px;line-height:27px;color:#71717a;left:674.5px;width:200px;text-align:center;">4</div>
<div class="t" id="r03n" style="top:1064.60px;font-size:28.84px;line-height:37px;color:#18181b;left:949.80px;letter-spacing:0.049px;">eval</div>
<div class="t m" id="r03j" style="top:1069.20px;font-size:24px;line-height:31px;color:#18181b;left:1141.00px;">{"audio":<span style="font-family:'Liberation Sans',sans-serif;font-weight:700">…</span></div>
<div class="t" id="r03o" style="top:1064.60px;font-size:28.84px;line-height:37px;color:#18181b;left:1380.50px;letter-spacing:0.871px;">unknown</div>
<div class="t" id="r03e" style="top:1064.60px;font-size:28.84px;line-height:37px;color:#18181b;left:1621.80px;letter-spacing:0.605px;">english</div>
<div class="t" id="r03t" style="top:1064.10px;font-size:25.75px;line-height:33px;color:#27272a;left:2204.00px;">–</div>
<div class="t" id="r03p" style="top:1064.60px;font-size:28.84px;line-height:37px;color:#18181b;left:2438.05px;letter-spacing:1.059px;">0.00%</div>
<div class="t" id="r03d" style="top:1064.60px;font-size:28.84px;line-height:37px;color:#18181b;left:2838.35px;letter-spacing:0.414px;">2.2s</div>
<div class="t" id="g1n" style="top:1145.50px;font-size:37.08px;line-height:48px;color:#18181b;left:904.40px;letter-spacing:-0.845px;">french</div>
<div class="t" id="g1c" style="top:1158.05px;font-size:24.72px;line-height:32px;color:#71717a;left:2209.45px;letter-spacing:0.387px;">4 in this group</div>
<div class="t w6" id="g1p" style="top:1154.00px;font-size:28.84px;line-height:37px;color:#18181b;left:2440.90px;letter-spacing:1.900px;">100%</div>
<div class="t" id="g1a" style="top:1160.80px;font-size:19.36px;line-height:25px;color:#52525b;left:2540.70px;letter-spacing:-0.044px;">AVG</div>
<div class="t w6" id="g1d" style="top:1154.00px;font-size:28.84px;line-height:37px;color:#18181b;left:2842.25px;letter-spacing:1.132px;">34.06s</div>
<div class="t" id="g1s" style="top:1160.80px;font-size:19.36px;line-height:25px;color:#52525b;left:2952.90px;letter-spacing:1.153px;">SUM</div>
<div class="t" id="r10i" style="top:1244.30px;font-size:20.6px;line-height:27px;color:#71717a;left:674.5px;width:200px;text-align:center;">1</div>
<div class="t" id="r10n" style="top:1240.60px;font-size:28.84px;line-height:37px;color:#18181b;left:949.80px;letter-spacing:0.049px;">eval</div>
<div class="t m" id="r10j" style="top:1245.20px;font-size:24px;line-height:31px;color:#18181b;left:1141.00px;">{"audio":<span style="font-family:'Liberation Sans',sans-serif;font-weight:700">…</span></div>
<div class="t" id="r10o" style="top:1240.60px;font-size:28.84px;line-height:37px;color:#18181b;left:1382.30px;letter-spacing:0.743px;">french</div>
<div class="t" id="r10e" style="top:1240.60px;font-size:28.84px;line-height:37px;color:#18181b;left:1622.70px;letter-spacing:0.743px;">french</div>
<div class="t" id="r10t" style="top:1240.10px;font-size:25.75px;line-height:33px;color:#27272a;left:2204.00px;">–</div>
<div class="t" id="r10p" style="top:1240.60px;font-size:28.84px;line-height:37px;color:#18181b;left:2437.15px;letter-spacing:1.510px;">100.00%</div>
<div class="t" id="r10d" style="top:1240.60px;font-size:28.84px;line-height:37px;color:#18181b;left:2838.35px;letter-spacing:0.544px;">9s</div>
<div class="t" id="r11i" style="top:1320.30px;font-size:20.6px;line-height:27px;color:#71717a;left:674.5px;width:200px;text-align:center;">2</div>
<div class="t" id="r11n" style="top:1316.60px;font-size:28.84px;line-height:37px;color:#18181b;left:949.80px;letter-spacing:0.049px;">eval</div>
<div class="t m" id="r11j" style="top:1321.20px;font-size:24px;line-height:31px;color:#18181b;left:1141.00px;">{"audio":<span style="font-family:'Liberation Sans',sans-serif;font-weight:700">…</span></div>
<div class="t" id="r11o" style="top:1316.60px;font-size:28.84px;line-height:37px;color:#18181b;left:1382.30px;letter-spacing:0.743px;">french</div>
<div class="t" id="r11e" style="top:1316.60px;font-size:28.84px;line-height:37px;color:#18181b;left:1622.70px;letter-spacing:0.743px;">french</div>
<div class="t" id="r11t" style="top:1316.10px;font-size:25.75px;line-height:33px;color:#27272a;left:2204.00px;">–</div>
<div class="t" id="r11p" style="top:1316.60px;font-size:28.84px;line-height:37px;color:#18181b;left:2437.15px;letter-spacing:1.510px;">100.00%</div>
<div class="t" id="r11d" style="top:1316.60px;font-size:28.84px;line-height:37px;color:#18181b;left:2838.35px;letter-spacing:0.414px;">7.3s</div>
<div class="t" id="r12i" style="top:1396.30px;font-size:20.6px;line-height:27px;color:#71717a;left:674.5px;width:200px;text-align:center;">3</div>
<div class="t" id="r12n" style="top:1392.60px;font-size:28.84px;line-height:37px;color:#18181b;left:949.80px;letter-spacing:0.049px;">eval</div>
<div class="t m" id="r12j" style="top:1397.20px;font-size:24px;line-height:31px;color:#18181b;left:1141.00px;">{"audio":<span style="font-family:'Liberation Sans',sans-serif;font-weight:700">…</span></div>
<div class="t" id="r12o" style="top:1392.60px;font-size:28.84px;line-height:37px;color:#18181b;left:1382.30px;letter-spacing:0.743px;">french</div>
<div class="t" id="r12e" style="top:1392.60px;font-size:28.84px;line-height:37px;color:#18181b;left:1622.70px;letter-spacing:0.743px;">french</div>
<div class="t" id="r12t" style="top:1392.10px;font-size:25.75px;line-height:33px;color:#27272a;left:2204.00px;">–</div>
<div class="t" id="r12p" style="top:1392.60px;font-size:28.84px;line-height:37px;color:#18181b;left:2437.15px;letter-spacing:1.510px;">100.00%</div>
<div class="t" id="r12d" style="top:1392.60px;font-size:28.84px;line-height:37px;color:#18181b;left:2838.35px;letter-spacing:0.414px;">9.9s</div>
<div class="t" id="r13i" style="top:1472.30px;font-size:20.6px;line-height:27px;color:#71717a;left:674.5px;width:200px;text-align:center;">4</div>
<div class="t" id="r13n" style="top:1468.60px;font-size:28.84px;line-height:37px;color:#18181b;left:949.80px;letter-spacing:0.049px;">eval</div>
<div class="t m" id="r13j" style="top:1473.20px;font-size:24px;line-height:31px;color:#18181b;left:1141.00px;">{"audio":<span style="font-family:'Liberation Sans',sans-serif;font-weight:700">…</span></div>
<div class="t" id="r13o" style="top:1468.60px;font-size:28.84px;line-height:37px;color:#18181b;left:1382.30px;letter-spacing:0.743px;">french</div>
<div class="t" id="r13e" style="top:1468.60px;font-size:28.84px;line-height:37px;color:#18181b;left:1622.70px;letter-spacing:0.743px;">french</div>
<div class="t" id="r13t" style="top:1468.10px;font-size:25.75px;line-height:33px;color:#27272a;left:2204.00px;">–</div>
<div class="t" id="r13p" style="top:1468.60px;font-size:28.84px;line-height:37px;color:#18181b;left:2437.15px;letter-spacing:1.510px;">100.00%</div>
<div class="t" id="r13d" style="top:1468.60px;font-size:28.84px;line-height:37px;color:#18181b;left:2838.35px;letter-spacing:0.414px;">7.8s</div>
<div class="t" id="g2n" style="top:1549.50px;font-size:37.08px;line-height:48px;color:#18181b;left:903.24px;letter-spacing:-1.897px;">german</div>
<div class="t" id="g2c" style="top:1562.05px;font-size:24.72px;line-height:32px;color:#71717a;left:2209.45px;letter-spacing:0.387px;">4 in this group</div>
<div class="t w6" id="g2p" style="top:1558.00px;font-size:28.84px;line-height:37px;color:#18181b;left:2440.90px;letter-spacing:1.900px;">100%</div>
<div class="t" id="g2a" style="top:1564.80px;font-size:19.36px;line-height:25px;color:#52525b;left:2540.70px;letter-spacing:-0.044px;">AVG</div>
<div class="t w6" id="g2d" style="top:1558.00px;font-size:28.84px;line-height:37px;color:#18181b;left:2841.80px;letter-spacing:0.976px;">29s</div>
<div class="t" id="g2s" style="top:1564.80px;font-size:19.36px;line-height:25px;color:#52525b;left:2909.20px;letter-spacing:1.153px;">SUM</div>
<div class="t" id="r20i" style="top:1648.30px;font-size:20.6px;line-height:27px;color:#71717a;left:674.5px;width:200px;text-align:center;">1</div>
<div class="t" id="r20n" style="top:1644.60px;font-size:28.84px;line-height:37px;color:#18181b;left:949.80px;letter-spacing:0.049px;">eval</div>
<div class="t m" id="r20j" style="top:1649.20px;font-size:24px;line-height:31px;color:#18181b;left:1141.00px;">{"audio":<span style="font-family:'Liberation Sans',sans-serif;font-weight:700">…</span></div>
<div class="t" id="r20o" style="top:1644.60px;font-size:28.84px;line-height:37px;color:#18181b;left:1381.40px;letter-spacing:0.247px;">german</div>
<div class="t" id="r20e" style="top:1644.60px;font-size:28.84px;line-height:37px;color:#18181b;left:1621.80px;letter-spacing:0.247px;">german</div>
<div class="t" id="r20t" style="top:1644.10px;font-size:25.75px;line-height:33px;color:#27272a;left:2204.00px;">–</div>
<div class="t" id="r20p" style="top:1644.60px;font-size:28.84px;line-height:37px;color:#18181b;left:2437.15px;letter-spacing:1.510px;">100.00%</div>
<div class="t" id="r20d" style="top:1644.60px;font-size:28.84px;line-height:37px;color:#18181b;left:2838.80px;letter-spacing:0.264px;">5.2s</div>
<div class="t" id="r21i" style="top:1724.30px;font-size:20.6px;line-height:27px;color:#71717a;left:674.5px;width:200px;text-align:center;">2</div>
<div class="t" id="r21n" style="top:1720.60px;font-size:28.84px;line-height:37px;color:#18181b;left:949.80px;letter-spacing:0.049px;">eval</div>
<div class="t m" id="r21j" style="top:1725.20px;font-size:24px;line-height:31px;color:#18181b;left:1141.00px;">{"audio":<span style="font-family:'Liberation Sans',sans-serif;font-weight:700">…</span></div>
<div class="t" id="r21o" style="top:1720.60px;font-size:28.84px;line-height:37px;color:#18181b;left:1381.40px;letter-spacing:0.247px;">german</div>
<div class="t" id="r21e" style="top:1720.60px;font-size:28.84px;line-height:37px;color:#18181b;left:1621.80px;letter-spacing:0.247px;">german</div>
<div class="t" id="r21t" style="top:1720.10px;font-size:25.75px;line-height:33px;color:#27272a;left:2204.00px;">–</div>
<div class="t" id="r21p" style="top:1720.60px;font-size:28.84px;line-height:37px;color:#18181b;left:2437.15px;letter-spacing:1.510px;">100.00%</div>
<div class="t" id="r21d" style="top:1720.60px;font-size:28.84px;line-height:37px;color:#18181b;left:2838.80px;letter-spacing:0.264px;">8.5s</div>
<div class="t" id="r22i" style="top:1800.30px;font-size:20.6px;line-height:27px;color:#71717a;left:674.5px;width:200px;text-align:center;">3</div>
<div class="t" id="r22n" style="top:1796.60px;font-size:28.84px;line-height:37px;color:#18181b;left:949.80px;letter-spacing:0.049px;">eval</div>
<div class="t m" id="r22j" style="top:1801.20px;font-size:24px;line-height:31px;color:#18181b;left:1141.00px;">{"audio":<span style="font-family:'Liberation Sans',sans-serif;font-weight:700">…</span></div>
<div class="t" id="r22o" style="top:1796.60px;font-size:28.84px;line-height:37px;color:#18181b;left:1381.40px;letter-spacing:0.247px;">german</div>
<div class="t" id="r22e" style="top:1796.60px;font-size:28.84px;line-height:37px;color:#18181b;left:1621.80px;letter-spacing:0.247px;">german</div>
<div class="t" id="r22t" style="top:1796.10px;font-size:25.75px;line-height:33px;color:#27272a;left:2204.00px;">–</div>
<div class="t" id="r22p" style="top:1796.60px;font-size:28.84px;line-height:37px;color:#18181b;left:2437.15px;letter-spacing:1.510px;">100.00%</div>
<div class="t" id="r22d" style="top:1796.60px;font-size:28.84px;line-height:37px;color:#18181b;left:2838.80px;letter-spacing:0.093px;">8s</div>
</div>
</body></html>
